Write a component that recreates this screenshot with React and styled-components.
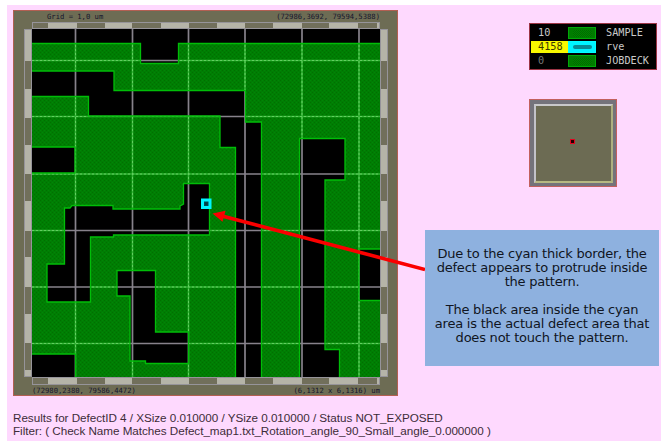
import React from "react";
import styled, { createGlobalStyle } from "styled-components";

const GlobalStyle = createGlobalStyle`
  body { margin: 0; background: #fff; }
  * { box-sizing: border-box; }
`;

const Page = styled.main`
  width: 668px;
  height: 444px;
  padding: 5px 7px 3px;
  overflow: hidden;
`;
const Sheet = styled.div`
  position: relative;
  width: 654px;
  height: 436px;
  padding: 5px 2px 0 6px;
  background: #fed9fe;
`;
const Columns = styled.div`
  display: flex;
  justify-content: space-between;
`;
const MapFrame = styled.section`
  display: grid;
  width: 385px;
  height: 386px;
  grid-template-columns: 10px 8px 348px 8px;
  grid-template-rows: 11px 7px 348px 8px 10px;
  border: 1px solid #b35f52;
  background: #6d6c54;
`;
const Caption = styled.div`
  grid-column: 3;
  display: flex;
  justify-content: space-between;
  padding-left: ${(p) => p.$indent || 0}px;
  font: 7.2px/11px "DejaVu Sans Mono", monospace;
  color: #15152c;
  white-space: pre;
`;
const Ruler = styled.div`
  display: flex;
  flex-direction: ${(p) => (p.$vertical ? "column" : "row")};
  grid-column: ${(p) => p.$col};
  grid-row: ${(p) => p.$row};
  border: 1px solid #96949a;
  background: #b5b4a8;
`;
const Tick = styled.i`
  flex: ${(p) => p.$size} 1 0;
  background: ${(p) => (p.$dark ? "#716f5b" : "#b5b4a8")};
`;
const Plot = styled.svg`
  grid-column: 3;
  grid-row: 3;
  display: block;
`;
const SideColumn = styled.div`
  width: 234px;
  padding-top: 13px;
`;
const Legend = styled.div`
  width: 128px;
  height: 47px;
  margin-left: 104px;
  padding: 2px 1px;
  border: 1px solid #9c3545;
  background: #000;
`;
const LegendRow = styled.div`
  display: grid;
  grid-template-columns: 37px 28px 1fr;
  height: 14px;
  align-items: center;
  font: 10.2px/12px "DejaVu Sans Mono", monospace;
  color: #c9c9c9;
`;
const LayerId = styled.span`
  height: 12px;
  padding-left: 7px;
  color: ${(p) => (p.$active ? "#3a3900" : p.$dim ? "#777" : "#c9c9c9")};
  background: ${(p) => (p.$active ? "#f8f800" : "transparent")};
`;
const Swatch = styled.span`
  display: flex;
  align-items: center;
  justify-content: center;
  height: 12px;
  border: 1px solid ${(p) => (p.$active ? "#00ffff" : "#00a808")};
  background: ${(p) => (p.$active ? "#00f4ff" : "#007c00")};
  &::after {
    content: "";
    width: 19px;
    height: ${(p) => (p.$active ? 4 : 7)}px;
    border-radius: 2px;
    background: ${(p) => (p.$active ? "#078b94" : "repeating-conic-gradient(#006b00 0 25%, #008500 0 50%) 0 0 / 2px 2px")};
  }
`;
const LayerName = styled.span`
  padding-left: 10px;
`;
const Overview = styled.div`
  width: 88px;
  height: 88px;
  margin: 29px 0 0 104px;
  padding: 4px;
  border: 1px solid #c3605e;
  background: #74737b;
`;
const OverviewArea = styled.div`
  display: grid;
  place-items: center;
  width: 79px;
  height: 79px;
  padding-right: 2px;
  padding-bottom: 4px;
  border: 2px solid;
  border-color: #c8c8ca #aeb080 #b6b882 #c2c2c8;
  background: #6c6b53;
`;
const Locator = styled.i`
  width: 5px;
  height: 5px;
  border: 1px solid #e00520;
  background: #200000;
`;
const Note = styled.aside`
  display: flex;
  flex-direction: column;
  gap: 14px;
  width: 234px;
  height: 136px;
  margin-top: 43px;
  padding-top: 17px;
  background: #8eb1df;
  font: 13px/14px "DejaVu Sans", sans-serif;
  letter-spacing: -0.22px;
  color: #101522;
  text-align: center;
  white-space: pre;
`;
const NoteText = styled.p`
  margin: 0;
`;
const Results = styled.footer`
  margin-top: 15px;
  font: 11.7px/13px "Liberation Sans", sans-serif;
  letter-spacing: -0.035px;
  color: #3d2c39;
  white-space: nowrap;
`;
const ResultLine = styled.div`
  height: 13px;
`;
const Pointer = styled.svg`
  position: absolute;
  left: 200px;
  top: 195px;
  pointer-events: none;
`;

const xTicks = [15, 29, 28, 28, 29, 28, 28, 28, 28, 30, 27, 29, 19, 2];
const yTicks = [31, 28, 29, 28, 29, 27, 30, 26, 30, 28, 28.5, 27.5, 6];
const gridX = [75.5, 132.5, 188.5, 245, 302, 359];
const gridY = [60.5, 116.5, 174, 230.5, 287, 343.5];

const gaps = [
  "M20 20H390V43.5H178.5V63.5H140.5V43.5H20Z",
  "M20 71H114V90.5H245.5V122H261.5V390H235.5V147.5H220V116H88.5V96.5H20Z",
  "M20 147H75V173H20Z",
  "M183.5 183.5H209.5V235H113.5V237H90.5V302H47V264H64.5V208H70L72 205.5H113V209H180V206L183.5 204Z",
  "M117 270.5H155.5V332H188.5V363.5H145.5V361H130V296H117Z",
  "M20 354H75.5V390H20Z",
  "M299.5 138.5H345V180H325V349.5H339.5V390H299.5Z",
  "M359 249H390V300.5H359Z",
].join(" ");

const gridPath =
  gridX.map((x) => `M${x} 29V377`).join("") + gridY.map((y) => `M32 ${y}H380`).join("");

const layers = [
  { id: "10", name: "SAMPLE" },
  { id: "4158", name: "rve", active: true },
  { id: "0", name: "JOBDECK", dim: true },
];

function AxisRuler({ ticks, vertical, col, row }) {
  return (
    <Ruler $vertical={vertical} $col={col} $row={row}>
      {ticks.map((size, i) => (
        <Tick key={i} $size={size} $dark={vertical ? i % 2 === 1 : i % 2 === 0} />
      ))}
    </Ruler>
  );
}

function DefectMap() {
  return (
    <MapFrame>
      <Caption $indent={15}>
        <span>Grid = 1,0 um</span>
        <span>(72986,3692, 79594,5388)</span>
      </Caption>
      <AxisRuler ticks={xTicks} col={3} row={2} />
      <AxisRuler ticks={yTicks} vertical col={2} row={3} />
      <Plot width="348" height="348" viewBox="32 29 348 348">
        <defs>
          <pattern id="weave" width="4" height="4" patternUnits="userSpaceOnUse">
            <rect width="4" height="4" fill="#007d03" />
            <path d="M0 0h1v1H0zM2 2h1v1H2z" fill="#007000" />
            <path d="M2 0h1v1H2zM0 2h1v1H0z" fill="#008606" />
          </pattern>
          <clipPath id="gaps">
            <path d={gaps} />
          </clipPath>
        </defs>
        <rect x="32" y="29" width="348" height="348" fill="url(#weave)" />
        <path d={gridPath} stroke="#35b638" strokeWidth="1.6" />
        <path d={gridPath} stroke="#62cf60" strokeWidth="1" strokeDasharray="2 2" />
        <path d={gaps} fill="#000" />
        <path d={gridPath} stroke="#87828b" strokeWidth="1.7" clipPath="url(#gaps)" />
        <path d={gaps} fill="none" stroke="#00bd08" strokeWidth="1.3" />
        <rect x="202.5" y="200" width="7.5" height="7.5" fill="#004c55" stroke="#00f5ff" strokeWidth="3" />
        <rect x="205" y="202.5" width="2.5" height="2.5" fill="#003c44" />
      </Plot>
      <AxisRuler ticks={yTicks} vertical col={4} row={3} />
      <AxisRuler ticks={xTicks} col={3} row={4} />
      <Caption>
        <span>(72980,2380, 79586,4472)</span>
        <span>(6,1312 x 6,1316) um</span>
      </Caption>
    </MapFrame>
  );
}

export default function App() {
  return (
    <Page>
      <GlobalStyle />
      <Sheet>
        <Columns>
          <DefectMap />
          <SideColumn>
            <Legend>
              {layers.map((l) => (
                <LegendRow key={l.id}>
                  <LayerId $active={l.active} $dim={l.dim}>{l.id}</LayerId>
                  <Swatch $active={l.active} />
                  <LayerName>{l.name}</LayerName>
                </LegendRow>
              ))}
            </Legend>
            <Overview>
              <OverviewArea>
                <Locator />
              </OverviewArea>
            </Overview>
            <Note>
              <NoteText>
                {"Due to the cyan thick border, the\ndefect appears to protrude inside\nthe pattern."}
              </NoteText>
              <NoteText>
                {"The black area inside the cyan\narea is the actual defect area that\ndoes not touch the pattern."}
              </NoteText>
            </Note>
          </SideColumn>
        </Columns>
        <Results>
          <ResultLine>Results for DefectID 4 / XSize 0.010000 / YSize 0.010000 / Status NOT_EXPOSED</ResultLine>
          <ResultLine>Filter: ( Check Name Matches Defect_map1.txt_Rotation_angle_90_Small_angle_0.000000 )</ResultLine>
        </Results>
        <Pointer width="218" height="80" viewBox="207 200 218 80">
          <path d="M222 216L425 269.5" stroke="#fb0000" strokeWidth="3.6" />
          <path d="M212.5 213.5L225.5 210.7L222.5 221.8Z" fill="#fb0000" />
        </Pointer>
      </Sheet>
    </Page>
  );
}
